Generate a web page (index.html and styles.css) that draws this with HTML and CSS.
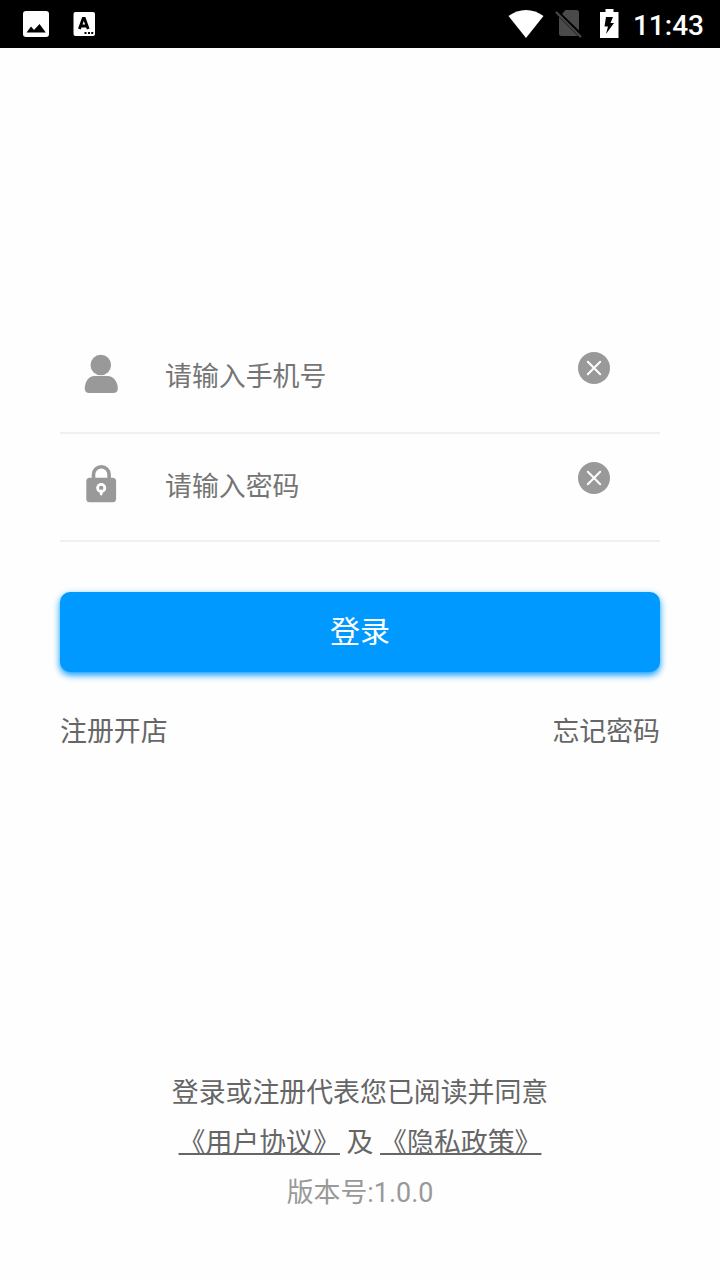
FILE: index.html
```html
<!DOCTYPE html>
<html lang="zh-CN">
<head>
    <meta charset="UTF-8">
    <meta name="viewport" content="width=device-width, initial-scale=1.0">
    <title>登录</title>
    <link rel="stylesheet" href="styles.css">
</head>
<body>
    <header class="status-bar">
        <div class="status-left">
            <svg class="icon-photo" width="26" height="26" viewBox="0 0 26 26">
                <rect width="26" height="26" rx="3" fill="#fff"/>
                <path d="M3.5 21.5L8 15.5L11 19L16.5 13L22.8 21.5Z" fill="#000"/>
            </svg>
            <svg class="icon-keyboard" width="22" height="24" viewBox="0 0 22 24">
                <rect x="0.5" width="21.5" height="24" rx="2" fill="#fff"/>
                <path d="M6.4 17L10.2 6.5H11.4L15.2 17M7.8 14H13.8" fill="none" stroke="#000" stroke-width="2.8"/>
                <path d="M11.5 20h2v2h-2zM15 20h2v2h-2zM18.2 20h2v2h-2z" fill="#000"/>
            </svg>
        </div>
        <div class="status-right">
            <svg class="icon-wifi" width="36" height="28" viewBox="0 0 36 28">
                <path d="M0.5 6C11-2 25-2 35.5 6L18 28Z" fill="#fff"/>
            </svg>
            <svg class="icon-sim" width="28" height="30" viewBox="0 0 28 30">
                <path d="M10.5 1H21.5Q24 1 24 3.5V21.5L7 5ZM4 8L23 27H6.5Q4 27 4 24.5Z" fill="#4a4a4a"/>
                <path d="M1 3L26 28" stroke="#4a4a4a" stroke-width="2.2"/>
            </svg>
            <svg class="icon-battery" width="20" height="30" viewBox="0 0 20 30">
                <path d="M6.5 0H14.5V3H19.5V29H1V3H6.5Z" fill="#fff"/>
                <path d="M7 8H14L11.5 14H15L7 25L9 17.5H5.5Z" fill="#000"/>
            </svg>
            <span class="clock">11:43</span>
        </div>
    </header>

    <main class="login">
        <div class="field field-phone">
            <svg class="field-icon" width="40" height="40" viewBox="0 0 40 40">
                <circle cx="18.8" cy="11" r="10.3" fill="#999"/>
                <path d="M12.5 22H25.5C31.5 22 35.8 28 35.8 34.5Q35.8 39 31 39H7.5Q2.8 39 2.8 34.5C2.8 28 6.5 22 12.5 22Z" fill="#999"/>
            </svg>
            <input class="field-input" type="text" placeholder="请输入手机号">
            <svg class="clear" width="32" height="32" viewBox="0 0 32 32">
                <circle cx="16" cy="16" r="16" fill="#999"/>
                <path d="M9.8 9.8L22.2 22.2M22.2 9.8L9.8 22.2" stroke="#fff" stroke-width="2" stroke-linecap="round"/>
            </svg>
        </div>
        <div class="field field-password">
            <svg class="field-icon" width="40" height="40" viewBox="0 0 40 40">
                <path d="M11.5 16V10.6A7.8 7.8 0 0 1 27.1 10.6V16" fill="none" stroke="#999" stroke-width="3.6"/>
                <rect x="4.3" y="13.7" width="29.8" height="24.5" rx="3.5" fill="#999"/>
                <circle cx="19.2" cy="24" r="3.6" fill="none" stroke="#fff" stroke-width="2.8"/>
                <path d="M19.2 27V30" stroke="#fff" stroke-width="2.8" stroke-linecap="round"/>
            </svg>
            <input class="field-input" type="password" placeholder="请输入密码">
            <svg class="clear" width="32" height="32" viewBox="0 0 32 32">
                <circle cx="16" cy="16" r="16" fill="#999"/>
                <path d="M9.8 9.8L22.2 22.2M22.2 9.8L9.8 22.2" stroke="#fff" stroke-width="2" stroke-linecap="round"/>
            </svg>
        </div>
        <button class="login-btn">登录</button>
        <div class="links">
            <a class="link">注册开店</a>
            <a class="link">忘记密码</a>
        </div>
    </main>

    <footer class="footer">
        <p>登录或注册代表您已阅读并同意</p>
        <p><a class="agreement">《用户协议》</a> 及 <a class="agreement">《隐私政策》</a></p>
        <p class="version">版本号:1.0.0</p>
    </footer>
</body>
</html>
```
FILE: styles.css
```css
* {
    box-sizing: border-box;
}
body {
    margin: 0;
    height: 1280px;
    display: flex;
    flex-direction: column;
    background-color: #fefefe;
    color: #666;
    font-family: Roboto, "Noto Sans CJK SC", sans-serif;
    font-size: 26.9px;
    font-weight: 400;
}
svg {
    display: block;
    flex-shrink: 0;
}

/* status bar */
.status-bar {
    height: 48px;
    padding: 0 16px 0 23px;
    display: flex;
    align-items: center;
    justify-content: space-between;
    background-color: #000;
}
.status-left,
.status-right {
    display: flex;
    align-items: center;
}
.status-left {
    gap: 24px;
}
.icon-sim {
    margin-left: 11px;
}
.icon-battery {
    margin-left: 16px;
}
.clock {
    margin-left: 14px;
    color: #fff;
    font-size: 28px;
    font-weight: 500;
    line-height: 46px;
    padding-top: 3px;
}

/* form */
.login {
    padding: 276px 60px 0;
}
.field {
    height: 110px;
    padding: 28px 50px 0 22px;
    display: flex;
    align-items: flex-start;
    border-bottom: 2px solid #f0f0f0;
}
.field-password {
    height: 108px;
}
.field-icon {
    margin-top: 2px;
}
.field-input {
    flex: 1;
    min-width: 0;
    height: 50px;
    margin-left: 43px;
    padding: 0;
    border: none;
    outline: none;
    background: none;
    color: #333;
    font: inherit;
}
.field-input::placeholder {
    color: #757575;
}
.login-btn {
    display: block;
    width: 100%;
    height: 80px;
    margin-top: 50px;
    padding: 0 0 6px;
    border: none;
    border-radius: 10px;
    background-color: #0099ff;
    box-shadow: 0 3px 7px #0099ff;
    color: #fff;
    font-family: inherit;
    font-size: 30px;
}
.links {
    display: flex;
    justify-content: space-between;
    margin-top: 35px;
    line-height: 50px;
}

/* agreement */
.footer {
    margin-top: auto;
    padding-bottom: 62px;
    text-align: center;
    line-height: 50px;
}
.footer p {
    margin: 0;
}
.agreement {
    text-decoration: underline;
    text-decoration-thickness: 2px;
    text-decoration-skip-ink: none;
}
.version {
    color: #999;
}
```
